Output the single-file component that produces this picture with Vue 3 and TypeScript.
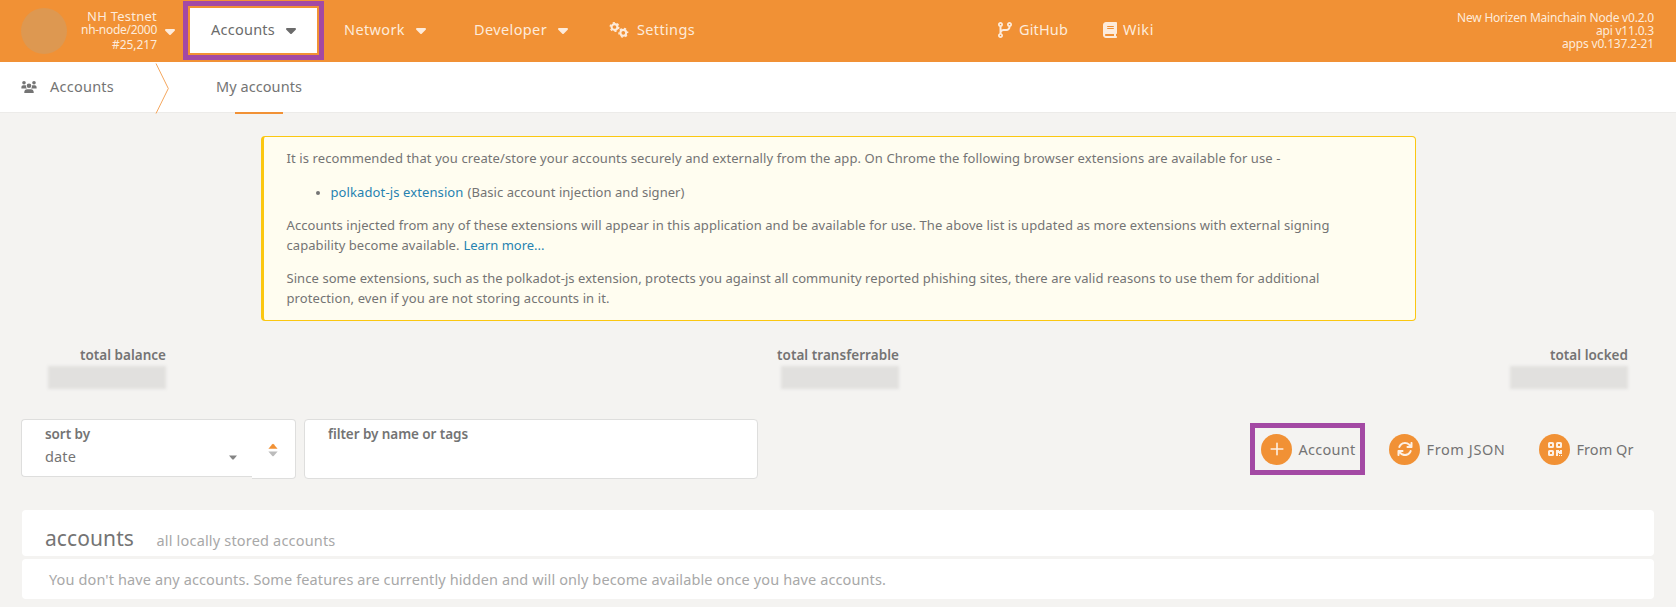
<script setup lang="ts">
import type { Directive } from 'vue'

// Tracks a line of text so that it fills the given width in pixels.
const vFit: Directive<HTMLElement, number> = {
  mounted(el, binding) {
    const chars = (el.textContent ?? '').length
    const natural = el.getBoundingClientRect().width
    el.style.letterSpacing = `${(binding.value - natural) / chars}px`
    el.style.width = `${binding.value}px`
  },
}

const caret =
  'M137.4 374.6c12.5 12.5 32.8 12.5 45.3 0l128-128c9.2-9.2 11.9-22.9 6.9-34.9s-16.6-19.8-29.6-19.8L32 192c-12.9 0-24.6 7.8-29.6 19.8s-2.2 25.7 6.9 34.9l128 128z'

const menus = [
  { label: 'Accounts', width: 64, cls: 'active' },
  { label: 'Network', width: 61, cls: 'network' },
  { label: 'Developer', width: 73, cls: 'developer' },
]

const totals = [
  { label: 'total balance', width: 86 },
  { label: 'total transferrable', width: 122 },
  { label: 'total locked', width: 78 },
]
</script>

<template>
  <div class="app">
    <header class="topbar">
      <div class="logo"></div>
      <div class="chain">
        <span v-fit="70" class="t">NH Testnet</span>
        <span v-fit="76" class="t">nh-node/2000</span>
        <span v-fit="45" class="t">#25,217</span>
      </div>
      <svg class="caret chain-caret" viewBox="0 0 320 512"><path :d="caret" /></svg>
      <nav class="menus">
        <div v-for="m in menus" :key="m.label" class="menu" :class="m.cls">
          <span v-fit="m.width" class="t">{{ m.label }}</span>
          <svg class="caret" viewBox="0 0 320 512"><path :d="caret" /></svg>
        </div>
      </nav>
      <div class="link settings">
        <svg width="20" height="16" viewBox="0 0 20 16">
          <g fill="none" stroke="currentColor">
            <circle cx="5.5" cy="5" r="2.9" stroke-width="2.1" />
            <circle cx="5.5" cy="5" r="4.3" stroke-width="1.5" stroke-dasharray="2.1 2.403" />
            <circle cx="14.3" cy="10.8" r="2.9" stroke-width="2.1" />
            <circle cx="14.3" cy="10.8" r="4.3" stroke-width="1.5" stroke-dasharray="2.1 2.403" stroke-dashoffset="2" />
          </g>
        </svg>
        <span v-fit="58" class="t">Settings</span>
      </div>
      <div class="link github">
        <svg width="14" height="16" viewBox="0 0 448 512">
          <path fill-rule="evenodd" d="M80 104a24 24 0 1 0 0-48 24 24 0 1 0 0 48zm80-24c0 32.8-19.7 61-48 73.3v87.8c18.8-10.9 40.7-17.1 64-17.1h96c35.3 0 64-28.7 64-64v-6.7C307.7 141 288 112.8 288 80c0-44.2 35.8-80 80-80s80 35.8 80 80c0 32.8-19.7 61-48 73.3V160c0 70.7-57.3 128-128 128H176c-35.3 0-64 28.7-64 64v6.7c28.3 12.3 48 40.5 48 73.3c0 44.2-35.8 80-80 80s-80-35.8-80-80c0-32.8 19.7-61 48-73.3V352 153.3C19.7 141 0 112.8 0 80C0 35.8 35.8 0 80 0s80 35.8 80 80zm232 0a24 24 0 1 0 -48 0 24 24 0 1 0 48 0zM80 456a24 24 0 1 0 0-48 24 24 0 1 0 0 48z" />
        </svg>
        <span v-fit="49" class="t">GitHub</span>
      </div>
      <div class="link wiki">
        <svg width="14" height="16" viewBox="0 0 448 512">
          <path d="M96 0C43 0 0 43 0 96V416c0 53 43 96 96 96H384h32c17.7 0 32-14.3 32-32s-14.3-32-32-32V384c17.7 0 32-14.3 32-32V32c0-17.7-14.3-32-32-32H384 96zm0 384H352v64H96c-17.7 0-32-14.3-32-32s14.3-32 32-32zm32-240c0-8.8 7.2-16 16-16H336c8.8 0 16 7.2 16 16s-7.2 16-16 16H144c-8.8 0-16-7.2-16-16zm16 48H336c8.8 0 16 7.2 16 16s-7.2 16-16 16H144c-8.8 0-16-7.2-16-16s7.2-16 16-16z" />
        </svg>
        <span v-fit="31" class="t">Wiki</span>
      </div>
      <div class="versions">
        <span v-fit="197" class="t">New Horizen Mainchain Node v0.2.0</span>
        <span v-fit="58" class="t">api v11.0.3</span>
        <span v-fit="92" class="t">apps v0.137.2-21</span>
      </div>
    </header>

    <div class="tabs">
      <svg class="users" width="16" height="14" viewBox="0 0 16 14">
        <circle cx="3" cy="2.8" r="1.8" />
        <circle cx="13" cy="2.8" r="1.8" />
        <circle cx="8" cy="5.8" r="2.3" />
        <path d="M.4 8.6V7.2C.4 6 1.2 5.2 2.3 5.2h1.5c.5 0 .9.1 1.2.4-.1 1.200.2 2.200.9 3zM15.600 8.600V7.200c0-1.200-.8-2-1.900-2h-1.500c-.5 0-.9.1-1.200.4.1 1.200-.2 2.200-.9 3zM3.300 13v-.9c0-1.600 1.200-2.800 2.700-2.800h4c1.500 0 2.700 1.200 2.700 2.800v.9z" />
      </svg>
      <span v-fit="64" class="t section">Accounts</span>
      <svg class="divider" width="14" height="51" viewBox="0 0 14 51">
        <path d="M1 .5 13.300 25.500 1 50.500" fill="none" stroke="#f4a65d" />
      </svg>
      <div class="tab"><span v-fit="86" class="t">My accounts</span></div>
    </div>

    <article class="notice">
      <p><span v-fit="994" class="t">It is recommended that you create/store your accounts securely and externally from the app. On Chrome the following browser extensions are available for use -</span></p>
      <ul>
        <li><a v-fit="133" class="t">polkadot-js extension</a><span v-fit="217" class="t gap">(Basic account injection and signer)</span></li>
      </ul>
      <p>
        <span v-fit="1043" class="t">Accounts injected from any of these extensions will appear in this application and be available for use. The above list is updated as more extensions with external signing</span><br />
        <span v-fit="173" class="t">capability become available.</span><a v-fit="81" class="t gap">Learn more...</a>
      </p>
      <p>
        <span v-fit="1033" class="t">Since some extensions, such as the polkadot-js extension, protects you against all community reported phishing sites, there are valid reasons to use them for additional</span><br />
        <span v-fit="323" class="t">protection, even if you are not storing accounts in it.</span>
      </p>
    </article>

    <section class="totals">
      <div v-for="t in totals" :key="t.label" class="total">
        <span v-fit="t.width" class="t">{{ t.label }}</span>
        <div class="masked"></div>
      </div>
    </section>

    <section class="controls">
      <div class="sort">
        <div class="select">
          <div>
            <label><span v-fit="45" class="t">sort by</span></label>
            <div class="value"><span v-fit="31" class="t">date</span></div>
          </div>
          <svg class="small-caret" width="8" height="5" viewBox="0 0 8 5"><path d="M0 .4h8L4.600 4.600H3.400z" /></svg>
        </div>
        <div class="order">
          <svg width="10" height="14" viewBox="0 0 10 14">
            <path d="M.4 5.800 4.300 1.200Q5 .4 5.700 1.200L9.600 5.800z" fill="#f19135" />
            <path d="M.4 8.400H9.600L5.700 13Q5 13.700 4.300 13z" fill="#bcbcbc" />
          </svg>
        </div>
      </div>
      <div class="filter">
        <label><span v-fit="140" class="t">filter by name or tags</span></label>
      </div>
      <div class="actions">
        <div class="action marked">
          <i><svg viewBox="0 0 16 16"><path d="M8 2.200v11.600M2.200 8h11.600" class="line" /></svg></i>
          <span v-fit="57" class="t">Account</span>
        </div>
        <div class="action json">
          <i>
            <svg viewBox="0 0 512 512">
              <path d="M105.1 202.6c7.7-21.8 20.2-42.3 37.8-59.8c62.5-62.5 163.8-62.5 226.3 0L386.3 160H336c-17.7 0-32 14.3-32 32s14.3 32 32 32H463.500h.4c17.7 0 32-14.3 32-32V64c0-17.7-14.3-32-32-32s-32 14.3-32 32v51.2L414.4 97.6c-87.5-87.5-229.3-87.5-316.8 0C73.2 122 55.6 150.7 44.8 181.4c-5.9 16.7 2.9 34.9 19.5 40.8s34.9-2.9 40.8-19.5zM39 289.3c-5 1.5-9.8 4.2-13.7 8.2c-4 4-6.7 8.8-8.1 14c-.3 1.2-.6 2.5-.8 3.8c-.3 1.7-.4 3.4-.4 5.1V448c0 17.7 14.3 32 32 32s32-14.3 32-32V396.9l17.6 17.5 0 0c87.5 87.4 229.3 87.4 316.7 0c24.4-24.4 42.1-53.1 52.9-83.7c5.9-16.7-2.9-34.9-19.5-40.8s-34.9 2.9-40.8 19.5c-7.7 21.8-20.2 42.3-37.8 59.8c-62.5 62.5-163.8 62.5-226.3 0l-.1-.1L125.6 352H176c17.7 0 32-14.3 32-32s-14.3-32-32-32H48.4c-1.6 0-3.2 .1-4.8 .3s-3.1 .5-4.6 1z" />
            </svg>
          </i>
          <span v-fit="79" class="t">From JSON</span>
        </div>
        <div class="action qr">
          <i>
            <svg viewBox="0 0 16 16">
              <g fill="none" stroke="currentColor" stroke-width="2">
                <rect x="2" y="2" width="4" height="4" rx=".5" />
                <rect x="10" y="2" width="4" height="4" rx=".5" />
                <rect x="2" y="10" width="4" height="4" rx=".5" />
              </g>
              <path d="M9 9h3v1h1V9h2v4h-3v-1h-1v3H9zM12 14h1v1h-1zM14 14h1v1h-1z" />
            </svg>
          </i>
          <span v-fit="57" class="t">From Qr</span>
        </div>
      </div>
    </section>

    <section class="panel head">
      <h1><span v-fit="89" class="t">accounts</span></h1>
      <span v-fit="179" class="t sub">all locally stored accounts</span>
    </section>
    <section class="panel empty">
      <span v-fit="837" class="t">You don't have any accounts. Some features are currently hidden and will only become available once you have accounts.</span>
    </section>
  </div>
</template>

<style>
body {
  background: #f4f3f1;
}
</style>

<style scoped>
.app {
  box-sizing: border-box;
  height: 607px;
  overflow: hidden;
  background: #f4f3f1;
  color: #747474;
  font-family: 'Noto Sans', 'Open Sans', sans-serif;
  font-size: 14.5px;
  line-height: 20px;
}
.app * {
  box-sizing: border-box;
}
.t {
  display: inline-block;
  white-space: nowrap;
  flex: none;
}
svg {
  display: block;
  flex: none;
  fill: currentColor;
}
.topbar {
  display: flex;
  align-items: center;
  height: 62px;
  padding: 0 22px 2px 21px;
  background: #f19135;
  color: #fdebdb;
}
.logo {
  width: 46px;
  height: 46px;
  margin-top: 2px;
  border-radius: 50%;
  background: #dd9851;
}
.chain {
  display: flex;
  flex-direction: column;
  align-items: flex-end;
  width: 90px;
  padding-top: 1px;
  font-size: 12px;
  line-height: 14.5px;
}
.chain span:first-child {
  font-size: 13px;
}
.caret {
  width: 10px;
  height: 16px;
}
.chain-caret {
  margin: 1px 8px 0;
}
.menus {
  display: flex;
  align-items: center;
}
.menu {
  display: flex;
  align-items: center;
  gap: 11px;
}
.menu .t,
.link .t {
  margin-top: -3px;
}
.active {
  width: 141px;
  height: 59px;
  padding-left: 23px;
  border: 5px solid #a349a4;
  background: linear-gradient(#fff, #fff) 2px 2px / 127px 45px no-repeat;
  color: #6b6b6b;
}
.network {
  margin-left: 20px;
}
.developer {
  margin-left: 48px;
}
.link {
  display: flex;
  align-items: center;
  gap: 8px;
}
.link svg {
  margin-top: -1px;
}
.settings {
  margin-left: 41px;
}
.github {
  margin-left: 303px;
  gap: 7px;
}
.wiki {
  margin-left: 35px;
  gap: 6px;
}
.versions {
  display: flex;
  flex-direction: column;
  align-items: flex-end;
  margin-left: auto;
  font-size: 12px;
  line-height: 13px;
}
.tabs {
  display: flex;
  align-items: center;
  height: 51px;
  padding-left: 21px;
  background: #fff;
  border-bottom: 1px solid #ecebe9;
}
.tabs .t {
  margin-top: -2px;
}
.users {
  margin: -1px 13px 0 0;
}
.divider {
  margin: 2px 0 0 41px;
}
.tab {
  display: flex;
  align-items: center;
  justify-content: center;
  position: relative;
  margin-left: 47px;
}
.tab::after {
  content: '';
  position: absolute;
  left: 19px;
  bottom: -18px;
  width: 48px;
  height: 2px;
  background: #f19135;
}
.notice {
  width: 1155px;
  height: 185px;
  margin: 23px 0 0 261px;
  padding: 11px 0 0 22.5px;
  border: 1px solid #fbc711;
  border-left-width: 3px;
  border-radius: 4px;
  background: #fffdf0;
  font-size: 13px;
  line-height: 20px;
}
.notice p {
  margin: 0 0 13px;
}
.notice .t {
  vertical-align: top;
}
.notice ul {
  margin: 14px 0 13px;
  padding-left: 44px;
}
.notice li::marker {
  font-size: 11px;
}
.gap {
  margin-left: 4px;
}
.notice a {
  color: #2682b0;
}
.totals {
  display: flex;
  justify-content: space-between;
  margin: 23px 48px 0 48px;
}
.total {
  display: flex;
  flex-direction: column;
  align-items: flex-end;
  width: 118px;
  font-size: 13.5px;
  font-weight: 600;
  line-height: 22px;
}
.total:nth-child(2) {
  margin-left: 4px;
}
.masked {
  width: 118px;
  height: 23px;
  background: #e1e0de;
  filter: blur(1.5px);
}
.controls {
  display: flex;
  height: 61px;
  margin: 30px 0 0 21px;
}
.sort {
  display: flex;
  width: 275px;
}
.select {
  display: flex;
  justify-content: space-between;
  align-items: flex-end;
  width: 231px;
  height: 58px;
  padding: 0 15px 0 23px;
  border: 1px solid #dededd;
  border-right: 0;
  border-radius: 4px 0 0 4px;
  background: #fff;
}
.select > div {
  align-self: flex-start;
}
label {
  display: block;
  height: 24px;
  padding-top: 4px;
  font-size: 13.5px;
  font-weight: 600;
  line-height: 21px;
}
.value {
  line-height: 24px;
}
.small-caret {
  margin-bottom: 16px;
  color: #858585;
}
.order {
  display: flex;
  width: 44px;
  height: 60px;
  padding: 23px 0 0 16px;
  border: 1px solid #dededd;
  border-left: 0;
  border-radius: 0 4px 4px 0;
  background: #fff;
}
.filter {
  width: 454px;
  height: 60px;
  margin-left: 8px;
  padding-left: 23px;
  border: 1px solid #dededd;
  border-radius: 4px;
  background: #fff;
}
.actions {
  display: flex;
  align-items: center;
  height: 60px;
  margin-left: 492px;
}
.action {
  display: flex;
  align-items: center;
  gap: 6.5px;
}
.marked {
  width: 115px;
  height: 52px;
  padding-left: 6px;
  border: 5px solid #a349a4;
}
.json {
  margin-left: 24px;
}
.qr {
  margin-left: 33.5px;
}
i {
  display: flex;
  align-items: center;
  justify-content: center;
  width: 31px;
  height: 31px;
  border-radius: 50%;
  background: #f19135;
  color: #fdf0e4;
}
i svg {
  width: 16px;
  height: 16px;
}
.line {
  stroke: currentColor;
  stroke-width: 1.6;
  stroke-linecap: round;
}
.panel {
  width: 1632px;
  margin-left: 22px;
  border-radius: 4px;
  background: #fff;
  color: #a8a8a8;
}
.head {
  display: flex;
  align-items: baseline;
  height: 46px;
  margin-top: 30px;
  padding: 13px 0 0 23px;
}
h1 {
  margin: 0;
  font-size: 21px;
  font-weight: 400;
  line-height: 30px;
  color: #747474;
}
.sub {
  margin-left: 22.5px;
}
.empty {
  height: 40px;
  margin-top: 3px;
  padding: 10px 0 0 27px;
}
</style>
